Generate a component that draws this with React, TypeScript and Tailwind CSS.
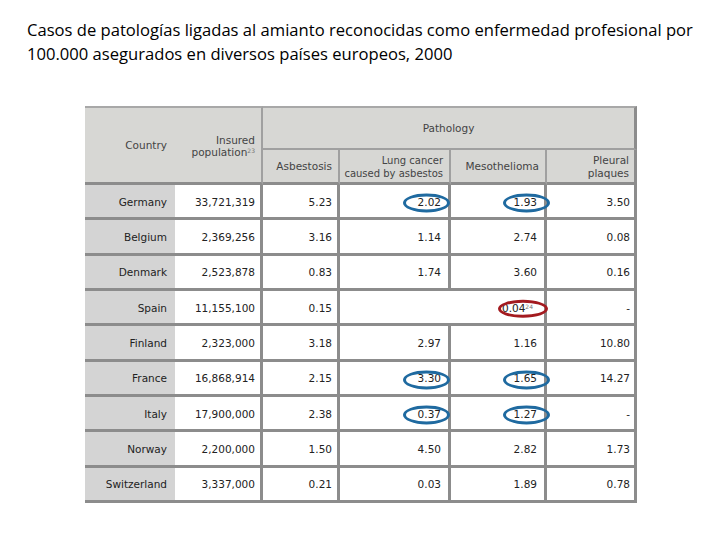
type Mark = 'blue' | 'red' | null;

type Row = {
  country: string;
  insured: string;
  asbestosis: string;
  lung: string | null;
  meso: string;
  pleural: string;
  lungMark?: Mark;
  mesoMark?: Mark;
  note?: string;
};

const ROWS: Row[] = [
  { country: 'Germany', insured: '33,721,319', asbestosis: '5.23', lung: '2.02', meso: '1.93', pleural: '3.50', lungMark: 'blue', mesoMark: 'blue' },
  { country: 'Belgium', insured: '2,369,256', asbestosis: '3.16', lung: '1.14', meso: '2.74', pleural: '0.08' },
  { country: 'Denmark', insured: '2,523,878', asbestosis: '0.83', lung: '1.74', meso: '3.60', pleural: '0.16' },
  { country: 'Spain', insured: '11,155,100', asbestosis: '0.15', lung: null, meso: '0.04', pleural: '-', mesoMark: 'red', note: '24' },
  { country: 'Finland', insured: '2,323,000', asbestosis: '3.18', lung: '2.97', meso: '1.16', pleural: '10.80' },
  { country: 'France', insured: '16,868,914', asbestosis: '2.15', lung: '3.30', meso: '1.65', pleural: '14.27', lungMark: 'blue', mesoMark: 'blue' },
  { country: 'Italy', insured: '17,900,000', asbestosis: '2.38', lung: '0.37', meso: '1.27', pleural: '-', lungMark: 'blue', mesoMark: 'blue' },
  { country: 'Norway', insured: '2,200,000', asbestosis: '1.50', lung: '4.50', meso: '2.82', pleural: '1.73' },
  { country: 'Switzerland', insured: '3,337,000', asbestosis: '0.21', lung: '0.03', meso: '1.89', pleural: '0.78' }
];

const cell = 'flex items-center justify-end border-b-[3px] border-[#8c8c8c] bg-white pt-[3px]';
const head = 'flex items-center bg-[#d7d7d4] text-[#444]';

function Ring(props: { readonly kind: Mark; readonly className: string }) {
  if (!props.kind) {
    return null;
  }
  const color = props.kind === 'red' ? 'border-[#a31a1f]' : 'border-[#1f6aa0]';
  return (
    <span
      className={`pointer-events-none absolute top-1/2 -translate-y-[40%] rounded-[50%] border-[3px] ${color} ${props.className}`}
    />
  );
}

export default function App() {
  return (
    <div className="h-[540px] w-[720px] bg-white">
      <p className="px-[27px] pt-[18px] text-[16.6px] leading-[24px] text-black [font-family:'Open_Sans','Liberation_Sans',sans-serif]">
        Casos de patologías ligadas al amianto reconocidas como enfermedad profesional por
        <br />
        100.000 asegurados en diversos países europeos, 2000
      </p>
      <div className="ml-[85px] mt-[40px] grid w-[552px] grid-cols-[90px_88px_77px_111px_96px_90px] grid-rows-[44px_35px_repeat(9,35.33px)] text-[10.5px] text-[#222] [font-family:'DejaVu_Sans',Verdana,sans-serif]">
        <div className={`${head} row-span-2 justify-end border-b-[3px] border-t-2 border-[#8c8c8c] border-t-[#a8a8a8] pr-[8px] pt-[2px]`}>
          Country
        </div>
        <div className={`${head} row-span-2 justify-end border-b-[3px] border-r-2 border-t-2 border-[#8c8c8c] border-r-[#a0a0a0] border-t-[#a8a8a8] pr-[6px] pt-[2px] text-right leading-[12px]`}>
          <span>
            Insured
            <br />
            population<sup className="text-[6px] text-[#777]">23</sup>
          </span>
        </div>
        <div className={`${head} col-span-4 justify-center border-b-2 border-r-[3px] border-t-2 border-[#a0a0a0] border-r-[#8c8c8c] border-t-[#a8a8a8] pt-[2px]`}>
          Pathology
        </div>
        <div className={`${head} justify-end border-b-[3px] border-r-2 border-[#8c8c8c] border-r-[#a0a0a0] pr-[6px] pt-[2px]`}>
          Asbestosis
        </div>
        <div className={`${head} justify-end border-b-[3px] border-r-2 border-[#8c8c8c] border-r-[#a0a0a0] pr-[6px] pt-[2px] text-right text-[10px] leading-[13px] whitespace-nowrap`}>
          <span>
            Lung cancer
            <br />
            caused by asbestos
          </span>
        </div>
        <div className={`${head} justify-end border-b-[3px] border-r-2 border-[#8c8c8c] border-r-[#a0a0a0] pr-[6px] pt-[2px]`}>
          Mesothelioma
        </div>
        <div className={`${head} justify-end border-b-[3px] border-r-[3px] border-[#8c8c8c] pr-[5px] pt-[2px] text-right leading-[13px]`}>
          <span>
            Pleural
            <br />
            plaques
          </span>
        </div>

        {ROWS.map((row) => (
          <RowCells key={row.country} row={row} />
        ))}
      </div>
    </div>
  );
}

function RowCells(props: { readonly row: Row }) {
  const { row } = props;
  return (
    <>
      <div className="flex items-center justify-end border-b-[3px] border-[#8c8c8c] bg-[#d4d4d4] pr-[8px] pt-[3px]">{row.country}</div>
      <div className={`${cell} border-r-[3px] pr-[5px]`}>{row.insured}</div>
      <div className={`${cell} border-r-[3px] pr-[5px]`}>{row.asbestosis}</div>
      {row.lung !== null ? (
        <>
          <div className={`${cell} relative border-r-[3px] pr-[7px]`}>
            {row.lung}
            <Ring className="right-[-2px] h-[19px] w-[47px]" kind={row.lungMark ?? null} />
          </div>
          <div className={`${cell} relative border-r-[3px] pr-[7px]`}>
            {row.meso}
            <Ring className="right-[-6px] h-[19px] w-[47px]" kind={row.mesoMark ?? null} />
          </div>
        </>
      ) : (
        <div className={`${cell} relative col-span-2 border-r-[3px] pr-[11px]`}>
          <span>
            {row.meso}
            <sup className="text-[6px] text-[#777]">{row.note}</sup>
          </span>
          <Ring className="right-[-4px] h-[18px] w-[50px]" kind={row.mesoMark ?? null} />
        </div>
      )}
      <div className={`${cell} border-r-[3px] pr-[4px]`}>{row.pleural}</div>
    </>
  );
}
